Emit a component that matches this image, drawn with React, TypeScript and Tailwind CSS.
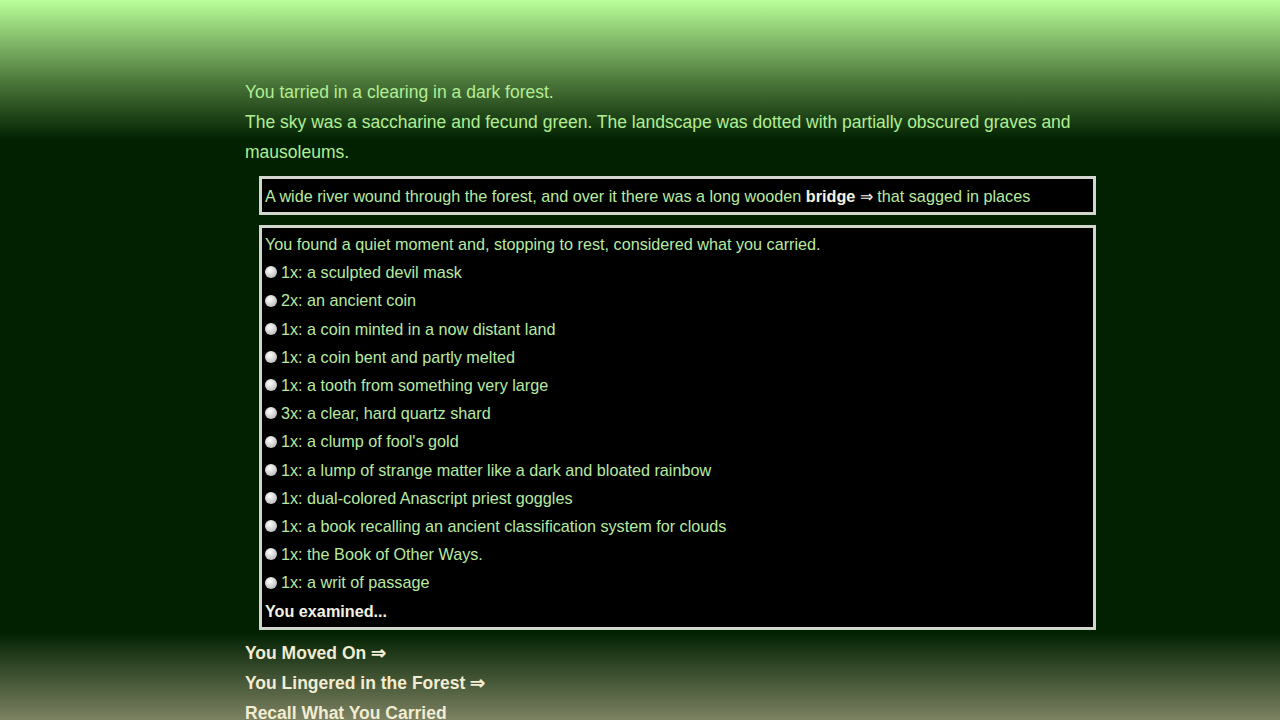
import React from "react";

const items = [
    "1x: a sculpted devil mask",
    "2x: an ancient coin",
    "1x: a coin minted in a now distant land",
    "1x: a coin bent and partly melted",
    "1x: a tooth from something very large",
    "3x: a clear, hard quartz shard",
    "1x: a clump of fool's gold",
    "1x: a lump of strange matter like a dark and bloated rainbow",
    "1x: dual-colored Anascript priest goggles",
    "1x: a book recalling an ancient classification system for clouds",
    "1x: the Book of Other Ways.",
    "1x: a writ of passage",
];

const links = ["You Moved On ⇒", "You Lingered in the Forest ⇒", "Recall What You Carried"];

function Bullet() {
    return (
        <span className="inline-block w-[12px] h-[12px] rounded-full bg-[radial-gradient(circle_at_40%_35%,#ffffff,#cfcfcf_55%,#a8a8a8)] mr-[4px] shrink-0" />
    );
}

export default function App() {
    return (
        <div className="h-screen overflow-y-scroll [&::-webkit-scrollbar]:w-[15px] [&::-webkit-scrollbar-track]:bg-[#f1f1f1] [&::-webkit-scrollbar-thumb]:bg-[#c1c1c1] [&::-webkit-scrollbar-thumb]:border-x-[2px] [&::-webkit-scrollbar-thumb]:border-y-[16px] [&::-webkit-scrollbar-thumb]:border-solid [&::-webkit-scrollbar-thumb]:border-[#f1f1f1] [&::-webkit-scrollbar-thumb]:bg-clip-padding">
            <div className="min-h-full bg-fixed bg-[linear-gradient(to_bottom,#b9fe99_0px,#4e7a3c_80px,#012101_140px,#012101_632px,#7c8262_720px)] font-['Liberation_Sans',Arial,sans-serif]">
                <div className="ml-[245px] w-[865px] pt-[77px] pb-[72px]">
                    <div className="text-[17.5px] leading-[30px] text-[#b2ee94]">
                        <p>You tarried in a clearing in a dark forest.</p>
                        <p>
                            The sky was a saccharine and fecund green. The landscape was dotted with partially obscured
                            graves and mausoleums.
                        </p>
                    </div>

                    <div className="mx-[14px] mt-[9px] border-[3px] border-[#d2d6ce] bg-black px-[3px] pt-[3px] pb-[2px] text-[16.2px] leading-[28px] text-[#b8eaa0]">
                        A wide river wound through the forest, and over it there was a long wooden{" "}
                        <span className="font-bold text-[#f4f2e2]">bridge</span> <span className="text-[#f0f0e4]">⇒</span>{" "}
                        that sagged in places
                    </div>

                    <div className="mx-[14px] mt-[10px] border-[3px] border-[#d2d6ce] bg-black px-[3px] pt-[2px] pb-[2px] text-[16.2px] leading-[28.2px] text-[#b8eaa0]">
                        <p>You found a quiet moment and, stopping to rest, considered what you carried.</p>
                        {items.map((item) => (
                            <div key={item} className="flex items-center">
                                <Bullet />
                                <span>{item}</span>
                            </div>
                        ))}
                        <p className="font-bold text-[#f4f2e2]">You examined...</p>
                    </div>

                    <div className="mt-[8px] text-[17.5px] leading-[30px] font-bold text-[#f2ecd2]">
                        {links.map((l) => (
                            <p key={l}>{l}</p>
                        ))}
                    </div>
                </div>
            </div>
        </div>
    );
}
